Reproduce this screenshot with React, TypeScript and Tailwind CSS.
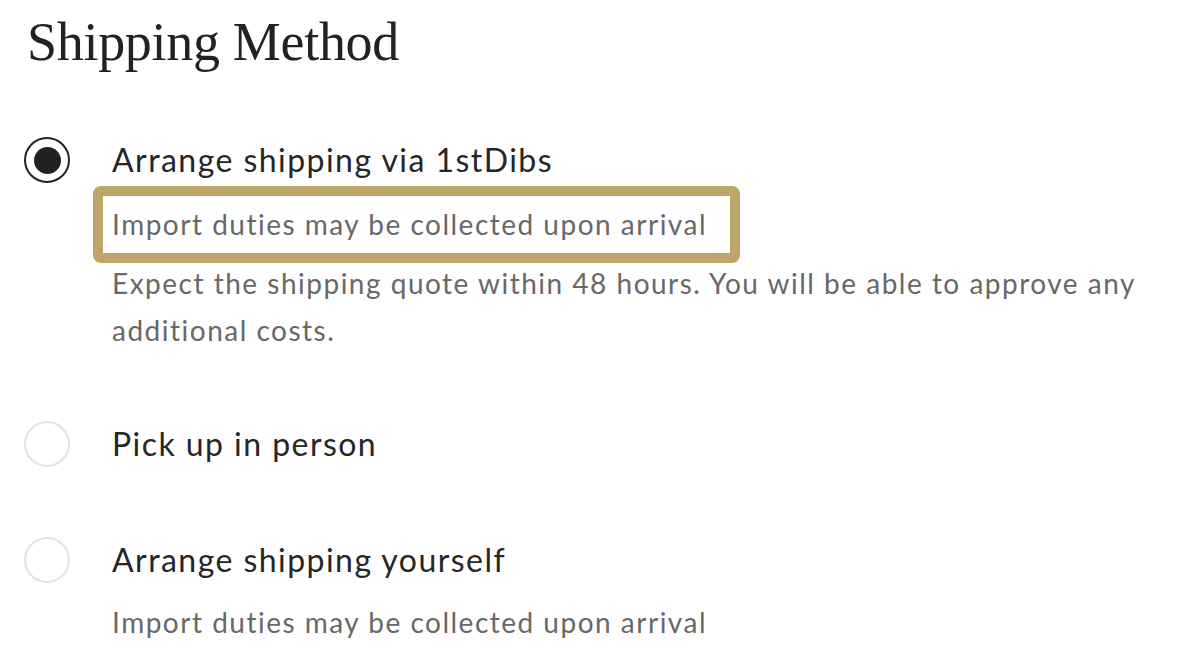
import React, { useState } from 'react';

type Option = {
  id: string;
  label: string;
  notes?: string[];
  highlight?: boolean;
};

const options: Option[] = [
  {
    id: 'firstdibs',
    label: 'Arrange shipping via 1stDibs',
    notes: [
      'Import duties may be collected upon arrival',
      'Expect the shipping quote within 48 hours. You will be able to approve any additional costs.',
    ],
    highlight: true,
  },
  { id: 'pickup', label: 'Pick up in person' },
  {
    id: 'self',
    label: 'Arrange shipping yourself',
    notes: ['Import duties may be collected upon arrival'],
  },
];

const Radio = ({ checked }: { checked: boolean }) =>
  checked ? (
    <span className="flex h-[46px] w-[46px] shrink-0 items-center justify-center rounded-full border-2 border-[#222]">
      <span className="h-[27px] w-[27px] rounded-full bg-[#222]" />
    </span>
  ) : (
    <span className="h-[46px] w-[46px] shrink-0 rounded-full border-2 border-[#e2e2e2]" />
  );

export default function App() {
  const [selected, setSelected] = useState('firstdibs');

  return (
    <div className="min-h-screen bg-white pl-[24px] pt-[12px] font-['Lato',sans-serif] text-[#222]">
      <h1 className="pl-[3px] font-['Liberation_Serif',serif] text-[54px] leading-[60px] tracking-[-0.3px] text-[#222]">
        Shipping Method
      </h1>

      <div className="mt-[65px] flex flex-col">
        {options.map((opt, i) => (
          <div
            key={opt.id}
            className={i === 0 ? '' : i === 1 ? 'mt-[67px]' : 'mt-[70px]'}
          >
            <label className="flex cursor-pointer items-center gap-[42px]" onClick={() => setSelected(opt.id)}>
              <Radio checked={selected === opt.id} />
              <span className="text-[32px] leading-[46px] tracking-[1.45px] text-[#262626]">{opt.label}</span>
            </label>

            {opt.notes && (
              <div className="pl-[69px] text-[28px] leading-[47px] tracking-[1.5px] text-[#686868]">
                {opt.highlight ? (
                  <>
                    <div className="mt-[3px] w-[647px] rounded-[8px] border-[10px] border-[#bea56a] px-[9px] py-[5px] leading-[47px]">
                      {opt.notes[0]}
                    </div>
                    <p className="-mt-[3px] max-w-[1080px] pl-[19px]">{opt.notes[1]}</p>
                  </>
                ) : (
                  <p className="mt-[16px] pl-[19px]">{opt.notes[0]}</p>
                )}
              </div>
            )}
          </div>
        ))}
      </div>
    </div>
  );
}
